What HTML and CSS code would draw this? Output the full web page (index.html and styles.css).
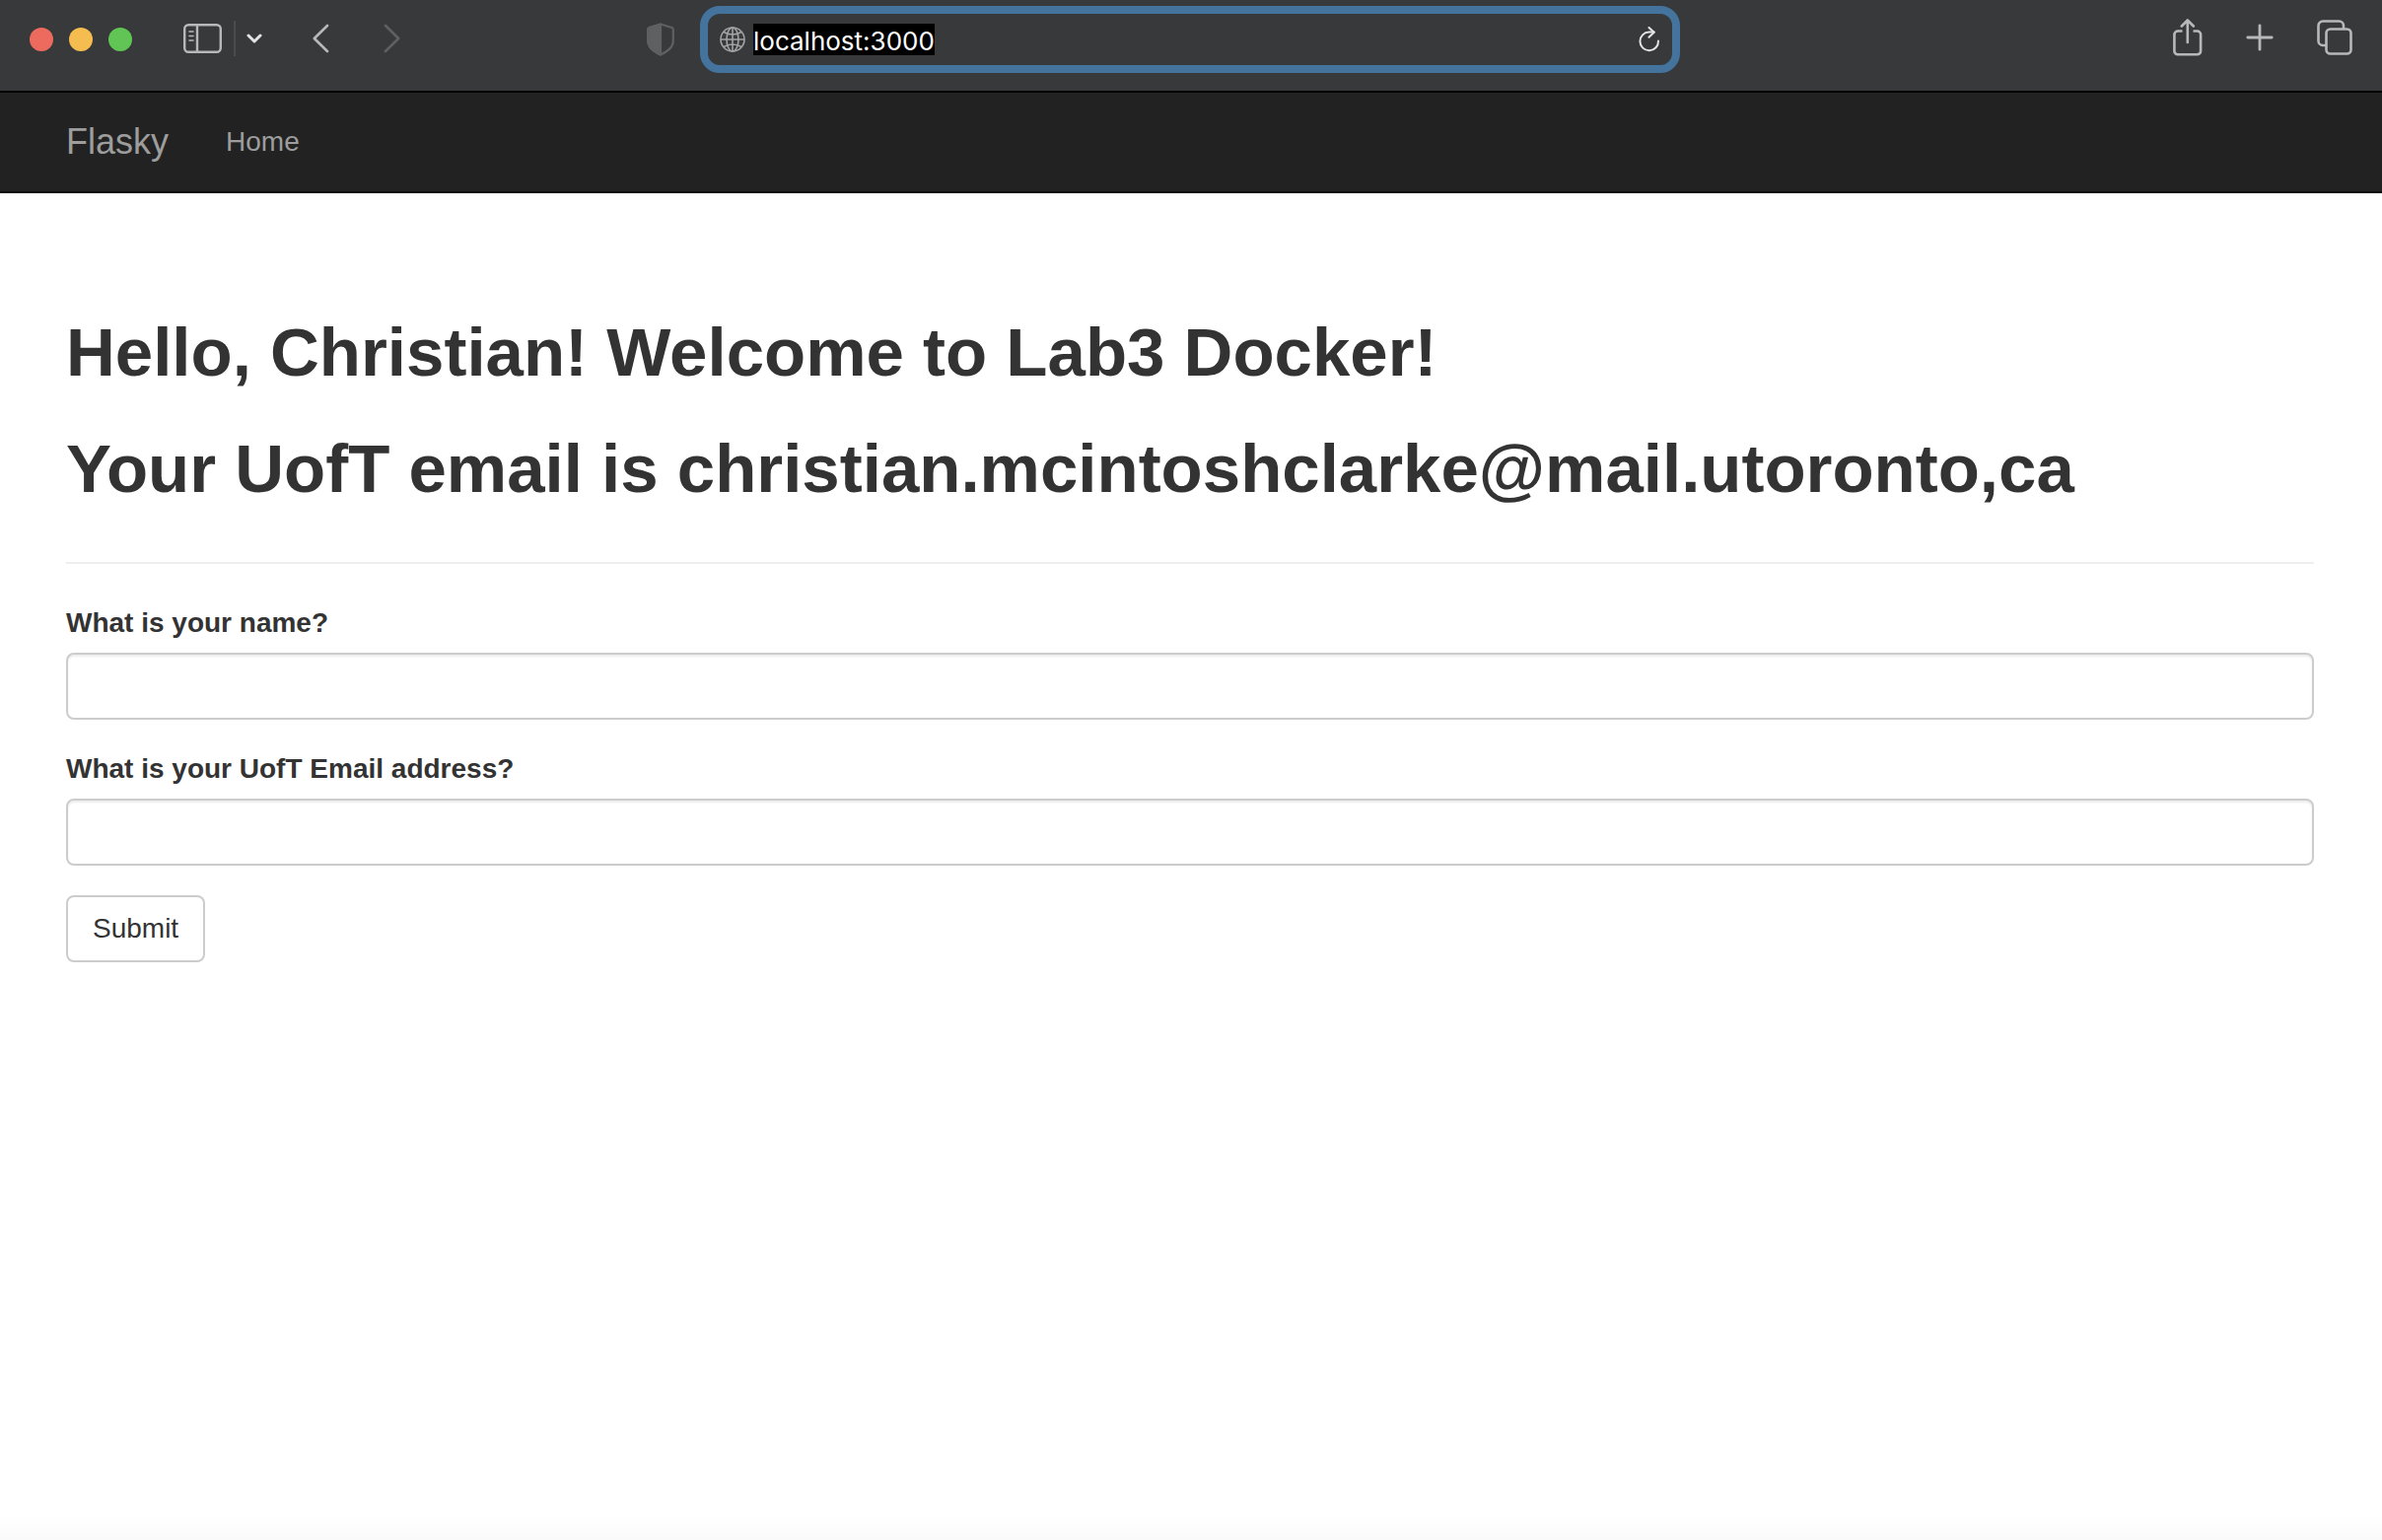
FILE: index.html
```html
<!DOCTYPE html>
<html lang="en">
<head>
<meta charset="utf-8">
<title>Flasky</title>
<link rel="stylesheet" href="styles.css">
</head>
<body>
<header class="toolbar">
  <div class="toolbar-side">
    <div class="lights">
      <span class="light light-close"></span>
      <span class="light light-minimize"></span>
      <span class="light light-zoom"></span>
    </div>
    <div class="sidebar-tools">
      <button class="tool" type="button" aria-label="Sidebar">
        <svg width="40" height="30" viewBox="0 0 40 30" fill="none" stroke="currentColor" stroke-width="2.4" stroke-linecap="round"><rect x="1.2" y="1.2" width="36.6" height="27.6" rx="4"/><path d="M14 1v28"/><path d="M6 8h4M6 12.500h4M6 17h4" stroke-width="1.600"/></svg>
      </button>
      <span class="divider"></span>
      <button class="tool tool-bright" type="button" aria-label="Sidebar menu">
        <svg width="16" height="10" viewBox="0 0 16 10" fill="none" stroke="currentColor" stroke-width="3" stroke-linecap="round" stroke-linejoin="round"><path d="M2 2l6 6 6-6"/></svg>
      </button>
    </div>
    <div class="history">
      <button class="tool" type="button" aria-label="Back">
        <svg width="17" height="30" viewBox="0 0 17 30" fill="none" stroke="currentColor" stroke-width="2.600" stroke-linecap="round" stroke-linejoin="round"><path d="M15 2L1.800 15 15 28"/></svg>
      </button>
      <button class="tool tool-dim" type="button" aria-label="Forward">
        <svg width="17" height="30" viewBox="0 0 17 30" fill="none" stroke="currentColor" stroke-width="2.600" stroke-linecap="round" stroke-linejoin="round"><path d="M2 2l13.200 13L2 28"/></svg>
      </button>
    </div>
    <button class="tool tool-dim tool-privacy" type="button" aria-label="Privacy report">
      <svg width="28" height="34" viewBox="0 0 28 34" fill="none" stroke="currentColor" stroke-width="2.200" stroke-linejoin="round"><path d="M14 1.500L2.500 5Q1.200 5.500 1.200 7v11c0 7 5 10.500 12.800 14.500C21.800 28.500 26.800 25 26.800 18V7q0-1.500-1.300-2z"/><path d="M14 1.500L2.500 5Q1.200 5.500 1.200 7v11c0 7 5 10.500 12.800 14.500z" fill="currentColor"/></svg>
    </button>
  </div>
  <div class="address">
    <svg width="26" height="26" viewBox="0 0 26 26" fill="none" stroke="#a2a3a4" stroke-width="1.600"><circle cx="13" cy="13" r="12"/><ellipse cx="13" cy="13" rx="6" ry="12"/><path d="M13 1v24M1 13h24M4 5.500q9 5 18 0M4 20.500q9-5 18 0"/></svg>
    <input class="address-input" type="text" value="localhost:3000" aria-label="Address">
    <button class="tool tool-bright tool-reload" type="button" aria-label="Reload">
      <svg width="22" height="26" viewBox="0 0 22 26" fill="none" stroke="currentColor" stroke-width="2" stroke-linecap="round" stroke-linejoin="round"><path d="M20 14.500A9.300 9.300 0 1 1 10.700 5.600h5"/><path d="M10.500 1l5.200 4.800-5.200 5"/></svg>
    </button>
  </div>
  <div class="toolbar-side toolbar-end">
    <button class="tool" type="button" aria-label="Share">
      <svg width="30" height="38" viewBox="0 0 30 38" fill="none" stroke="currentColor" stroke-width="2.600" stroke-linecap="round" stroke-linejoin="round"><path d="M9.500 12.500H5a3.600 3.600 0 0 0-3.600 3.600v16.600a3.600 3.600 0 0 0 3.600 3.600h19.500a3.600 3.600 0 0 0 3.600-3.600V16.100a3.600 3.600 0 0 0-3.600-3.600H20.500" stroke-linecap="butt"/><path d="M14.800 24V2M8.800 7.500l6-6 6 6"/></svg>
    </button>
    <button class="tool" type="button" aria-label="New tab">
      <svg width="28" height="28" viewBox="0 0 28 28" fill="none" stroke="currentColor" stroke-width="2.800" stroke-linecap="round"><path d="M14 1.800v24.400M1.800 14h24.400"/></svg>
    </button>
    <button class="tool" type="button" aria-label="Tab overview">
      <svg width="36" height="36" viewBox="0 0 36 36" fill="none" stroke="currentColor" stroke-width="2.600"><rect x="9.500" y="9.500" width="25" height="25" rx="4"/><path d="M9.500 26H6a4.500 4.500 0 0 1-4.500-4.500V6A4.500 4.500 0 0 1 6 1.500h16.500A4.500 4.500 0 0 1 27 6v3.500"/></svg>
    </button>
  </div>
</header>
<nav class="navbar">
  <a class="brand" href="#">Flasky</a>
  <a class="nav-link" href="#">Home</a>
</nav>
<main class="page">
  <div class="page-header">
    <h1>Hello, Christian! Welcome to Lab3 Docker!</h1>
    <h1>Your UofT email is christian.mcintoshclarke@mail.utoronto,ca</h1>
  </div>
  <form class="form">
    <div class="form-group">
      <label for="name">What is your name?</label>
      <input class="form-control" id="name" type="text">
    </div>
    <div class="form-group">
      <label for="email">What is your UofT Email address?</label>
      <input class="form-control" id="email" type="text">
    </div>
    <button class="submit" type="submit">Submit</button>
  </form>
</main>
</body>
</html>
```
FILE: styles.css
```css
* {
  box-sizing: border-box;
}

body {
  margin: 0;
  min-height: 100vh;
  background: linear-gradient(to top, #fafafa, #fff 24px);
  color: #333;
  font-family: "Liberation Sans", Arial, sans-serif;
  font-size: 28px;
  line-height: 40px;
}

svg {
  display: block;
}

/* Browser toolbar */
.toolbar {
  display: grid;
  grid-template-columns: 1fr 994px 1fr;
  align-items: center;
  height: 94px;
  padding: 0 2px 12px 0;
  border-bottom: 2px solid #000;
  background: #38393b;
}

.toolbar-side {
  display: flex;
  align-items: center;
  padding-left: 30px;
}

.toolbar-end {
  justify-content: flex-end;
  gap: 44px;
  padding: 0 28px 4px 0;
}

.lights {
  display: flex;
  gap: 16px;
  margin-right: 52px;
}

.light {
  width: 24px;
  height: 24px;
  border-radius: 50%;
}

.light-close {
  background: #ed6a5f;
}

.light-minimize {
  background: #f5bd4f;
}

.light-zoom {
  background: #61c555;
}

.sidebar-tools {
  display: flex;
  align-items: center;
  gap: 11px;
  margin-right: 51px;
  padding-bottom: 2px;
}

.divider {
  width: 2px;
  height: 36px;
  background: #4b4c4e;
}

.history {
  display: flex;
  gap: 55px;
  padding-bottom: 2px;
}

.tool {
  padding: 0;
  border: 0;
  background: none;
  color: #b7b8b9;
}

.tool-bright {
  color: #e4e4e5;
}

.tool-dim {
  color: #5f6062;
}

.tool-privacy {
  margin: 0 26px 0 auto;
}

.address {
  display: flex;
  align-items: center;
  gap: 8px;
  height: 68px;
  padding: 0 12px;
  border: 8px solid #44739e;
  border-radius: 20px;
}

.address-input {
  field-sizing: content;
  height: 32px;
  padding: 2px 0 0;
  border: 0;
  background: #000;
  color: #fff;
  font-family: Inter, sans-serif;
  font-size: 26px;
  line-height: 30px;
}

.tool-reload {
  margin-left: auto;
}

/* Site navigation */
.navbar {
  display: flex;
  align-items: center;
  gap: 58px;
  height: 102px;
  padding: 0 67px;
  border-bottom: 2px solid #080808;
  background: #222;
}

.brand,
.nav-link {
  color: #9d9d9d;
  text-decoration: none;
}

.brand {
  font-size: 36px;
}

/* Page content */
.page {
  padding: 123px 69px 40px 67px;
}

.page-header {
  margin-bottom: 40px;
  padding-bottom: 55px;
  border-bottom: 2px solid #eee;
}

h1 {
  margin: 0;
  font-size: 69px;
  font-weight: 700;
  line-height: 78px;
}

h1 + h1 {
  margin-top: 40px;
}

.form-group {
  margin-bottom: 30px;
}

label {
  display: block;
  margin-bottom: 10px;
  font-weight: 700;
}

.form-control {
  display: block;
  width: 100%;
  height: 68px;
  padding: 12px 24px;
  border: 2px solid #ccc;
  border-radius: 8px;
  background: #fff;
  box-shadow: inset 0 2px 2px rgba(0, 0, 0, 0.075);
  font: inherit;
}

.submit {
  height: 68px;
  padding: 0 25px;
  border: 2px solid #ccc;
  border-radius: 8px;
  background: #fff;
  color: #333;
  font: inherit;
}
```
